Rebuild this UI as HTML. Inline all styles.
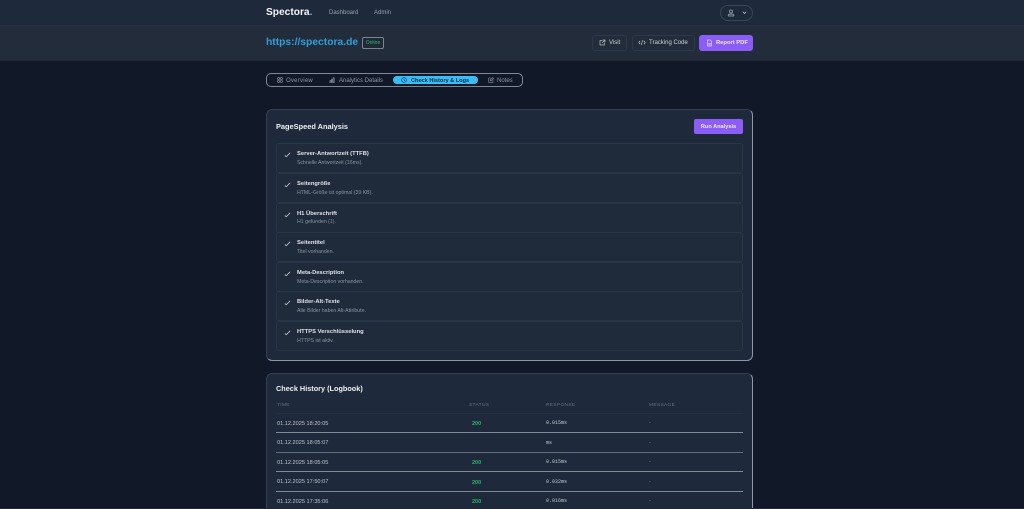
<!DOCTYPE html>
<html lang="de"><head><meta charset="utf-8"><title>Spectora</title>
<style>
*{box-sizing:border-box;margin:0;padding:0}
html,body{width:1024px;height:509px;overflow:hidden;background:#111827;font-family:"Liberation Sans",sans-serif;color:#e5e7eb}
#w{position:relative;width:1024px;height:509px;overflow:hidden;background:#111827;filter:blur(.25px)}
.a{position:absolute;white-space:nowrap}
svg{position:absolute;fill:none;stroke-linecap:round;stroke-linejoin:round}
.nav{left:0;top:0;width:1024px;height:26px;background:#1e293b;border-bottom:1px solid #263244}
.head{left:0;top:26px;width:1024px;height:35px;background:#222c3a;border-bottom:1px solid #1e2734}
.card{left:266px;width:487px;background:#1e293b;border:1px solid #344052;border-right-color:#8f97a3;border-bottom-color:#8f97a3;border-radius:6px}
.row{left:276px;width:467px;height:30px;border:1px solid #2a3648;border-radius:3px;background:#1f2a3a}
.rt{left:297px;font-size:5.8px;font-weight:bold;color:#dfe4ea;line-height:7px}
.rs{left:297px;font-size:5.2px;color:#8b95a4;line-height:7px}
.th{font-size:4.8px;color:#687385;letter-spacing:.35px;top:402px;line-height:7px}
.td{left:277px;font-size:5.6px;color:#c0c6cf;line-height:7px}
.st{left:472px;font-size:5.5px;font-weight:bold;color:#2fb56c;line-height:7px}
.ms{left:546px;font-family:"Liberation Mono",monospace;font-size:5px;color:#c4cad2;line-height:7px}
.da{left:649px;font-size:5px;color:#8b95a4;line-height:7px}
.ln{left:276px;width:467px;height:1px;background:#7f8894}
.btn{height:16px;border:1px solid #2c3849;border-radius:3px}
.tb{top:78px;font-size:6px;color:#8f99a8;line-height:7px}
</style></head><body><div id="w">
<div class="a nav"></div>
<div class="a head"></div>
<div class="a" style="left:266px;top:6px;font-size:10.2px;font-weight:bold;color:#f4f6f8;line-height:13px">Spectora<span style="color:#38bdf8">.</span></div>
<div class="a" style="left:329px;top:10px;font-size:6px;color:#98a2b0;line-height:7px">Dashboard</div>
<div class="a" style="left:374px;top:10px;font-size:6px;color:#98a2b0;line-height:7px">Admin</div>
<div class="a" style="left:720px;top:5px;width:33px;height:16px;border:1px solid #3a4658;border-radius:8px"></div>
<svg style="left:727px;top:9px" width="8" height="8" viewBox="0 0 8 8" stroke="#aab2bd" stroke-width=".7"><circle cx="4" cy="2.5" r="1.5"/><path d="M1.2 7V6.3C1.2 5.4 2 5 4 5s2.8.4 2.8 1.3V7z"/></svg>
<svg style="left:742px;top:11px" width="5" height="4" viewBox="0 0 5 4" stroke="#c0c6cf" stroke-width=".8"><path d="M1 1l1.5 1.5L4 1"/></svg>

<div class="a" style="left:266px;top:36px;font-size:10.3px;font-weight:bold;color:#2f9fdb;line-height:14px">https://spectora.de</div>
<div class="a" style="left:362px;top:37px;width:22px;height:12px;border:1px solid #7c8592;border-radius:2px;background:#1f2a36;font-size:5px;color:#2fb56c;text-align:center;line-height:11px">Online</div>

<div class="a btn" style="left:592px;top:35px;width:35px"></div>
<svg style="left:599px;top:39px" width="7" height="7" viewBox="0 0 7 7" stroke="#b9c0ca" stroke-width=".7"><path d="M5.5 4v2H1V1.5h2M4 1h2v2M6 1L3.2 3.8"/></svg>
<div class="a" style="left:609px;top:40px;font-size:6px;color:#cbd2da;line-height:7px">Visit</div>
<div class="a btn" style="left:632px;top:35px;width:63px"></div>
<svg style="left:638px;top:39px" width="8" height="7" viewBox="0 0 8 7" stroke="#b9c0ca" stroke-width=".7"><path d="M2 2L.8 3.5 2 5M6 2l1.2 1.5L6 5M4.6 1.5L3.4 5.5"/></svg>
<div class="a" style="left:649px;top:40px;font-size:6px;color:#cbd2da;line-height:7px">Tracking Code</div>
<div class="a" style="left:699px;top:35px;width:54px;height:16px;background:#8b5cf6;border-radius:3px"></div>
<svg style="left:706px;top:39px" width="7" height="8" viewBox="0 0 7 8" stroke="#e4d9fd" stroke-width=".7"><path d="M1.5 1h2.8L5.5 2.2V7h-4zM2.5 4.5h2M2.5 5.8h2"/></svg>
<div class="a" style="left:716px;top:40px;font-size:5.8px;font-weight:bold;color:#efeafd;line-height:7px">Report PDF</div>

<div class="a" style="left:266px;top:73px;width:257px;height:14px;border:1px solid #7f8894;border-radius:5px"></div>
<div class="a" style="left:393px;top:76px;width:85px;height:8px;background:#38bdf8;border-radius:4px"></div>
<svg style="left:277px;top:77px" width="6" height="6" viewBox="0 0 6 6" stroke="#8b95a4" stroke-width=".6"><path d="M.7.7h1.8v1.8H.7zM3.5.7h1.8v1.8H3.5zM.7 3.5h1.8v1.8H.7zM3.5 3.5h1.8v1.8H3.5z"/></svg>
<div class="a tb" style="left:286px;letter-spacing:.25px">Overview</div>
<svg style="left:329px;top:77px" width="6" height="6" viewBox="0 0 6 6" stroke="#8b95a4" stroke-width=".6"><path d="M.6 5.5h4.8M1 5.5V3.4h1v2.1M2.6 5.5V2h1v3.5M4.2 5.5V.7h1v4.8"/></svg>
<div class="a tb" style="left:339px">Analytics Details</div>
<svg style="left:401px;top:77px" width="6" height="6" viewBox="0 0 6 6" stroke="#12384d" stroke-width=".6"><circle cx="3" cy="3" r="2.4"/><path d="M3 1.6V3l1 .7"/></svg>
<div class="a" style="left:411px;top:78px;font-size:5.6px;font-weight:bold;color:#0f2a3d;line-height:7px">Check History &amp; Logs</div>
<svg style="left:488px;top:77px" width="6" height="6" viewBox="0 0 6 6" stroke="#8b95a4" stroke-width=".6"><path d="M5 3.4v2H.7V1h2.1M2.2 3.8l.2-1.2L4.6.6l1 1-2.2 2z"/></svg>
<div class="a tb" style="left:497px">Notes</div>

<div class="a card" style="top:109px;height:252px"></div>
<div class="a" style="left:276px;top:122px;font-size:7.4px;font-weight:bold;color:#eef1f4;line-height:9px">PageSpeed Analysis</div>
<div class="a" style="left:694px;top:119px;width:49px;height:15px;background:#8b5cf6;border-radius:2px;font-size:5.6px;font-weight:bold;color:#f1ecfe;text-align:center;line-height:16px">Run Analysis</div>

<div class="a row" style="top:143px"></div>
<div class="a row" style="top:173px"></div>
<div class="a row" style="top:203px"></div>
<div class="a row" style="top:232px"></div>
<div class="a row" style="top:262px"></div>
<div class="a row" style="top:291px"></div>
<div class="a row" style="top:321px"></div>

<svg style="left:284px;top:152px" width="7" height="6" viewBox="0 0 7 6" stroke="#dfe4ea" stroke-width=".7"><path d="M1 3.6l1.2 1.1L6 1"/></svg>
<svg style="left:284px;top:182px" width="7" height="6" viewBox="0 0 7 6" stroke="#dfe4ea" stroke-width=".7"><path d="M1 3.6l1.2 1.1L6 1"/></svg>
<svg style="left:284px;top:212px" width="7" height="6" viewBox="0 0 7 6" stroke="#dfe4ea" stroke-width=".7"><path d="M1 3.6l1.2 1.1L6 1"/></svg>
<svg style="left:284px;top:241px" width="7" height="6" viewBox="0 0 7 6" stroke="#dfe4ea" stroke-width=".7"><path d="M1 3.6l1.2 1.1L6 1"/></svg>
<svg style="left:284px;top:271px" width="7" height="6" viewBox="0 0 7 6" stroke="#dfe4ea" stroke-width=".7"><path d="M1 3.6l1.2 1.1L6 1"/></svg>
<svg style="left:284px;top:300px" width="7" height="6" viewBox="0 0 7 6" stroke="#dfe4ea" stroke-width=".7"><path d="M1 3.6l1.2 1.1L6 1"/></svg>
<svg style="left:284px;top:330px" width="7" height="6" viewBox="0 0 7 6" stroke="#dfe4ea" stroke-width=".7"><path d="M1 3.6l1.2 1.1L6 1"/></svg>

<div class="a rt" style="top:151px">Server-Antwortzeit (TTFB)</div><div class="a rs" style="top:160px">Schnelle Antwortzeit (16ms).</div>
<div class="a rt" style="top:181px">Seitengröße</div><div class="a rs" style="top:190px">HTML-Größe ist optimal (39 KB).</div>
<div class="a rt" style="top:211px">H1 Überschrift</div><div class="a rs" style="top:219px">H1 gefunden (1).</div>
<div class="a rt" style="top:240px">Seitentitel</div><div class="a rs" style="top:249px">Titel vorhanden.</div>
<div class="a rt" style="top:270px">Meta-Description</div><div class="a rs" style="top:279px">Meta-Description vorhanden.</div>
<div class="a rt" style="top:299px">Bilder-Alt-Texte</div><div class="a rs" style="top:308px">Alle Bilder haben Alt-Attribute.</div>
<div class="a rt" style="top:329px">HTTPS Verschlüsselung</div><div class="a rs" style="top:338px">HTTPS ist aktiv.</div>

<div class="a card" style="top:373px;height:150px"></div>
<div class="a" style="left:276px;top:384px;font-size:7.3px;font-weight:bold;color:#eef1f4;line-height:9px">Check History (Logbook)</div>
<div class="a th" style="left:277px">TIME</div>
<div class="a th" style="left:469px">STATUS</div>
<div class="a th" style="left:546px">RESPONSE</div>
<div class="a th" style="left:649px">MESSAGE</div>
<div class="a" style="left:276px;top:413px;width:467px;height:1px;background:#242f40"></div>

<div class="a td" style="top:421px">01.12.2025 18:20:05</div><div class="a st" style="top:421px">200</div><div class="a ms" style="top:420px">0.015ms</div><div class="a da" style="top:420px">-</div>
<div class="a ln" style="top:432px"></div>
<div class="a td" style="top:440px">01.12.2025 18:05:07</div><div class="a ms" style="top:440px">ms</div><div class="a da" style="top:440px">-</div>
<div class="a ln" style="top:452px;background:#626d7c"></div>
<div class="a td" style="top:460px">01.12.2025 18:05:05</div><div class="a st" style="top:460px">200</div><div class="a ms" style="top:459px">0.015ms</div><div class="a da" style="top:459px">-</div>
<div class="a ln" style="top:471px"></div>
<div class="a td" style="top:479px">01.12.2025 17:50:07</div><div class="a st" style="top:480px">200</div><div class="a ms" style="top:479px">0.032ms</div><div class="a da" style="top:479px">-</div>
<div class="a ln" style="top:491px"></div>
<div class="a td" style="top:499px">01.12.2025 17:35:06</div><div class="a st" style="top:499px">200</div><div class="a ms" style="top:498px">0.016ms</div><div class="a da" style="top:498px">-</div>
<div class="a" style="left:0;top:508px;width:1024px;height:1px;background:#23263a"></div>
</div></body></html>
